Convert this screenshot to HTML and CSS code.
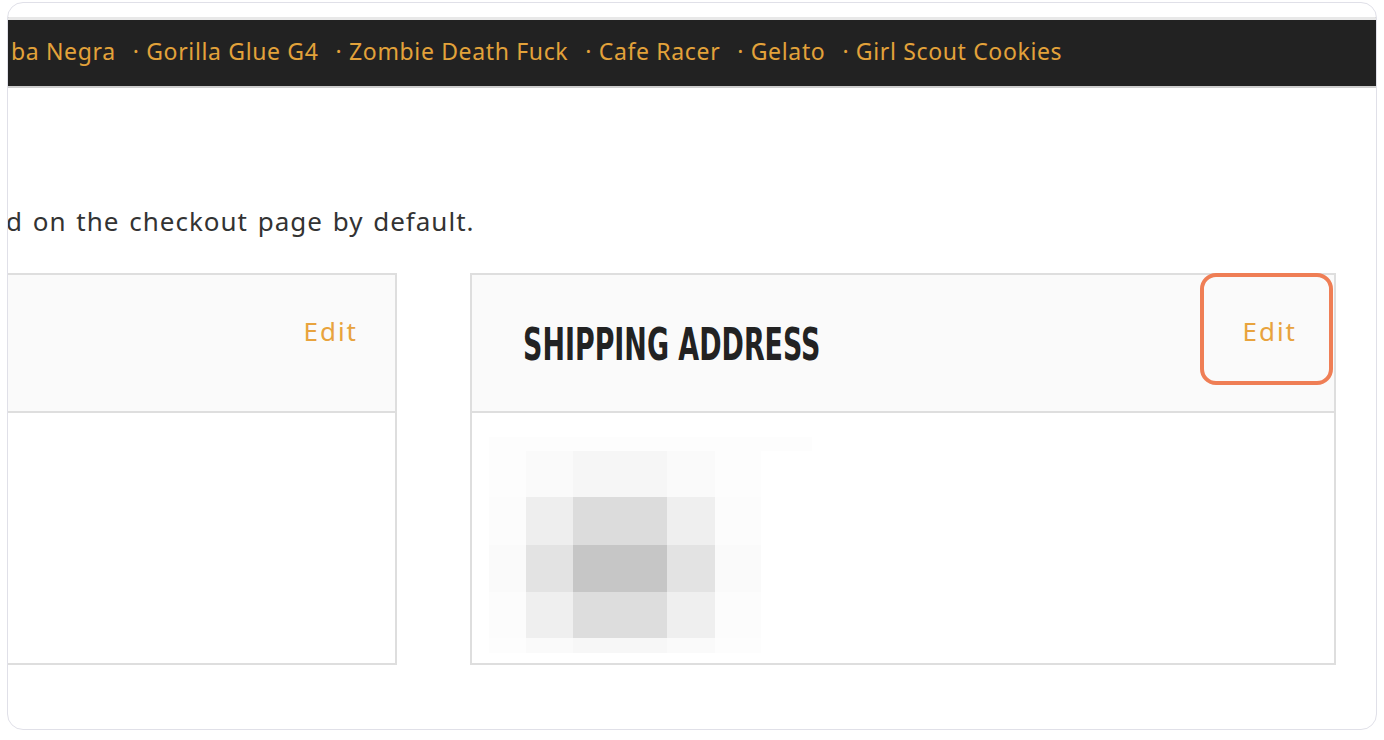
FILE: index.html
```html
<!DOCTYPE html>
<html lang="en">
<head>
  <meta charset="UTF-8">
  <title>Addresses</title>
  <link rel="stylesheet" href="styles.css">
</head>
<body>
  <div class="frame">
    <div class="ticker">
      <span class="strain first">ba Negra</span>
      <span class="strain">· Gorilla Glue G4</span>
      <span class="strain">· Zombie Death Fuck</span>
      <span class="strain">· Cafe Racer</span>
      <span class="strain">· Gelato</span>
      <span class="strain">· Girl Scout Cookies</span>
    </div>

    <p class="intro">d on the checkout page by default.</p>

    <div class="panels">
      <div class="panel billing">
        <div class="panel-head">
          <h3 class="panel-title"></h3>
          <a class="edit" href="#">Edit</a>
        </div>
        <div class="panel-body"></div>
      </div>

      <div class="panel shipping">
        <div class="panel-head">
          <h3 class="panel-title"><span>SHIPPING ADDRESS</span></h3>
          <a class="edit" href="#">Edit</a>
          <span class="highlight"></span>
        </div>
        <div class="panel-body">
          <div class="blur">
            <i style="grid-column: 1 / 7; background:#fdfdfd"></i>
            <i style="background:#fdfdfd"></i><i style="background:#fafafa"></i><i style="background:#f6f6f6"></i><i style="background:#fafafa"></i><i style="background:#fdfdfd"></i><i></i>
            <i style="background:#fcfcfc"></i><i style="background:#eeeeee"></i><i style="background:#dcdcdc"></i><i style="background:#efefef"></i><i style="background:#fcfcfc"></i><i></i>
            <i style="background:#fafafa"></i><i style="background:#e3e3e3"></i><i style="background:#c6c6c6"></i><i style="background:#e3e3e3"></i><i style="background:#fafafa"></i><i></i>
            <i style="background:#fcfcfc"></i><i style="background:#efefef"></i><i style="background:#dddddd"></i><i style="background:#efefef"></i><i style="background:#fcfcfc"></i><i></i>
            <i style="background:#fdfdfd"></i><i style="background:#fafafa"></i><i style="background:#f7f7f7"></i><i style="background:#fafafa"></i><i style="background:#fdfdfd"></i><i></i>
          </div>
        </div>
      </div>
    </div>
  </div>
</body>
</html>
```

FILE: styles.css
```css
body { margin: 0; background: #fff; font-family: "Noto Sans", "DejaVu Sans", sans-serif; }

.frame {
  margin: 2px 7px 0 7px;
  height: 726px;
  border: 1px solid #e0e0e8;
  border-radius: 16px;
  overflow: hidden;
}

/* strain ticker */
.ticker {
  margin-top: 14px;
  border-top: 3px solid #e8e8e8;
  border-bottom: 2px solid #cfcfcf;
  background: #222;
  display: flex;
  align-items: center;
  gap: 17px;
  padding-left: 3px;
  padding-bottom: 4px;
  box-sizing: border-box;
  height: 71px;
  white-space: nowrap;
}
.strain { color: #e3a23a; font-size: 23px; font-weight: 400; letter-spacing: 0.65px; }

.intro {
  margin: 118px 0 0 -2px;
  font-size: 26px;
  letter-spacing: 1px;
  word-spacing: 2px;
  color: #333;
  line-height: 30px;
}

.panels {
  display: flex;
  margin-top: 37px;
  gap: 73px;
}
.panel { border: 2px solid #dedede; box-sizing: border-box; height: 392px; }
.billing { width: 410px; margin-left: -21px; }
.shipping { width: 866px; }

.panel-head {
  position: relative;
  height: 136px;
  background: #fafafa;
  border-bottom: 2px solid #dedede;
  display: flex;
  justify-content: space-between;
  align-items: flex-start;
  padding: 0 37px 0 51px;
}
.panel-title {
  margin: 48px 0 0;
  font-family: "Liberation Sans Narrow", "DejaVu Sans Condensed", sans-serif;
  font-size: 44px;
  font-weight: 700;
  color: #222;
  line-height: 44px;
}
.panel-title span { display: inline-block; transform: scaleX(0.68); transform-origin: left; }
.edit {
  margin-top: 38px;
  color: #e8a33d;
  font-size: 26px;
  letter-spacing: 2px;
  text-decoration: none;
}
.highlight {
  position: absolute;
  top: -2px;
  right: 1px;
  width: 133px;
  height: 112px;
  box-sizing: border-box;
  border: 4px solid #ef7e55;
  border-radius: 16px;
}

.panel-body { padding: 24px 0 0 17px; }
.blur {
  display: grid;
  grid-template-columns: 37px 47px 94px 48px 46px 51px;
  grid-template-rows: 14px 46px 48px 47px 46px 15px;
}
```
